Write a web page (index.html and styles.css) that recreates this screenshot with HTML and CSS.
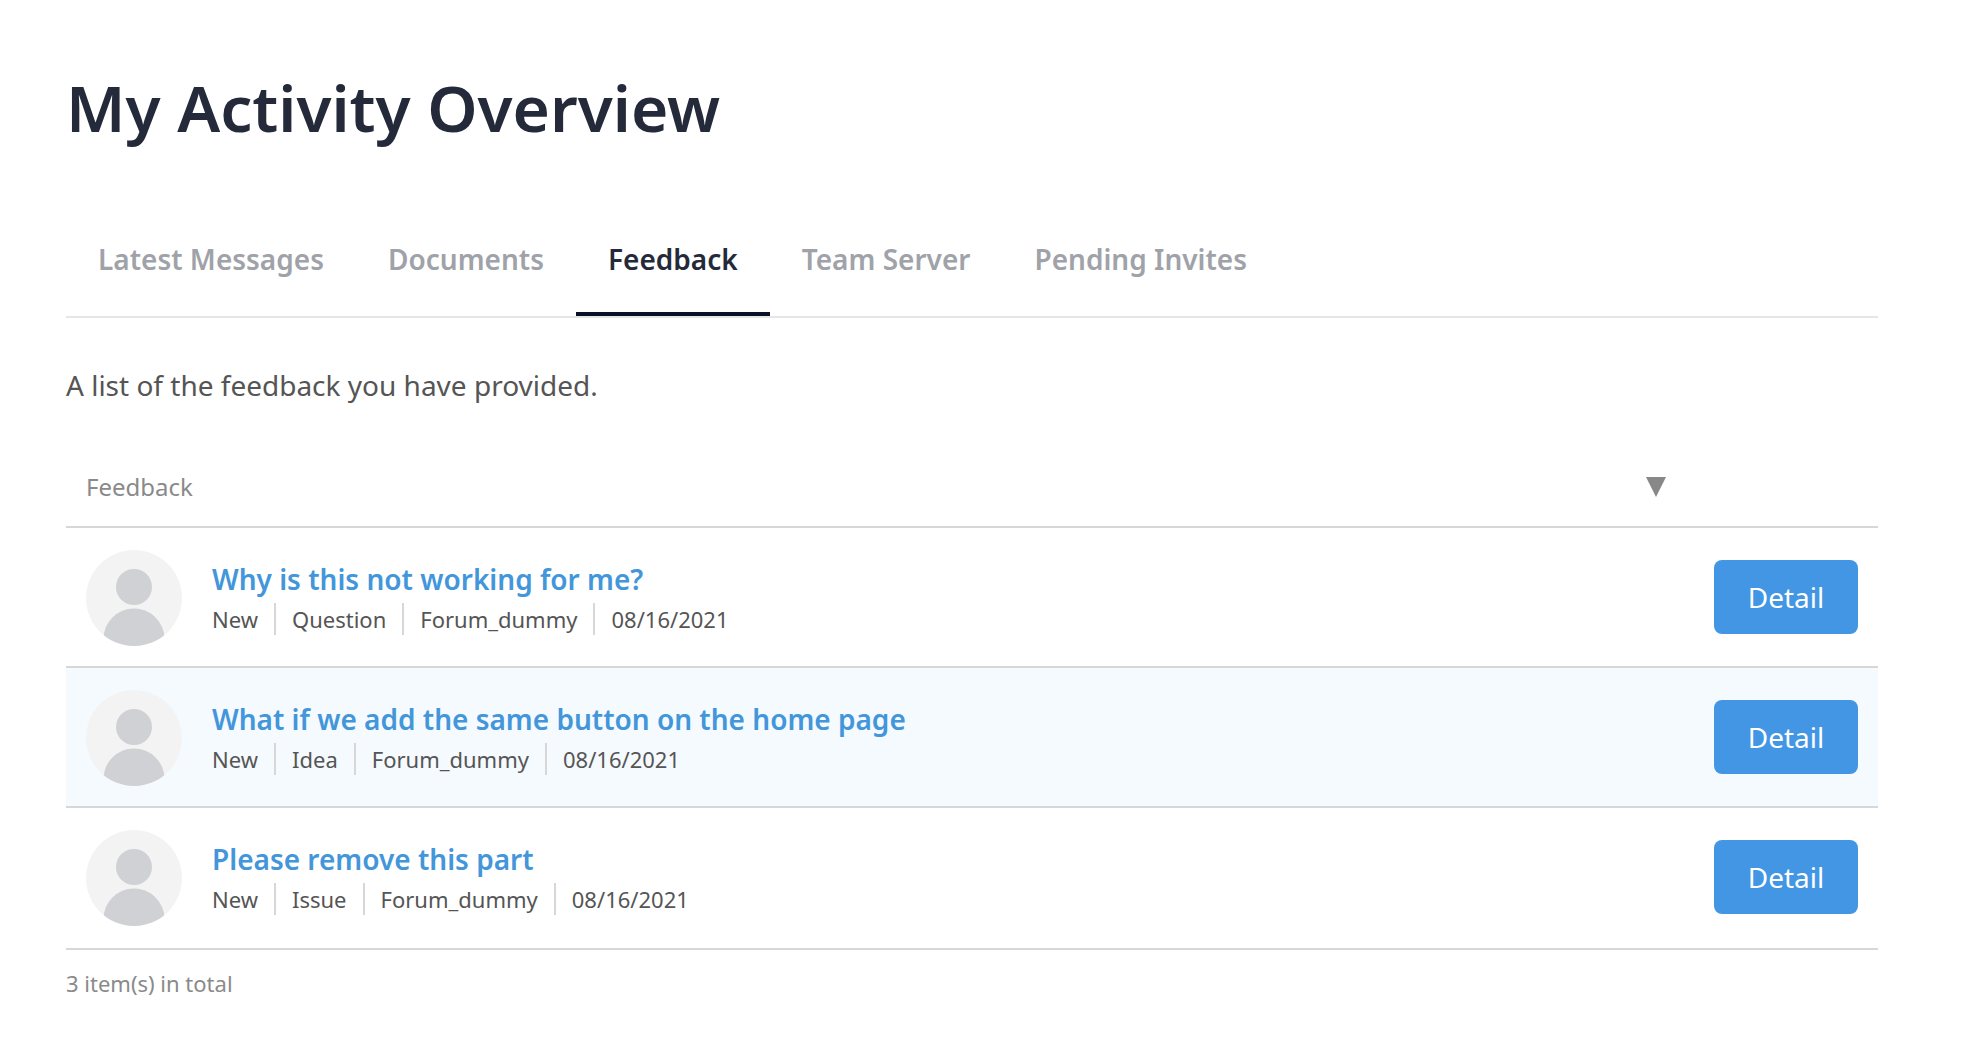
FILE: index.html
```html
<!DOCTYPE html>
<html lang="en">
<head>
<meta charset="utf-8">
<meta name="viewport" content="width=device-width, initial-scale=1">
<title>My Activity Overview</title>
<link rel="stylesheet" href="styles.css">
</head>
<body>
<svg class="sprite" aria-hidden="true">
  <symbol id="person" viewBox="0 0 96 96">
    <clipPath id="round"><circle cx="48" cy="48" r="48"/></clipPath>
    <circle cx="48" cy="48" r="48" fill="#f3f3f3"/>
    <g fill="#d0d1d5" clip-path="url(#round)">
      <circle cx="48" cy="37" r="18"/>
      <circle cx="48" cy="89" r="30.500"/>
    </g>
  </symbol>
</svg>
<main class="page">
  <h1 class="page-title">My Activity Overview</h1>
  <nav class="tabs">
    <a class="tab" href="#messages">Latest Messages</a>
    <a class="tab" href="#documents">Documents</a>
    <a class="tab tab-active" href="#feedback" aria-current="page">Feedback</a>
    <a class="tab" href="#team">Team Server</a>
    <a class="tab" href="#invites">Pending Invites</a>
  </nav>
  <p class="intro">A list of the feedback you have provided.</p>
  <table class="list">
    <thead>
      <tr>
        <th scope="col"><div class="list-head">Feedback
          <button class="sort" type="button" aria-label="Sort by feedback"><svg class="sort-icon" viewBox="0 0 20 20"><path d="M0 0H20L10 20Z" fill="#888"/></svg></button>
        </div></th>
        <td class="action"></td>
      </tr>
    </thead>
    <tbody>
      <tr>
        <td>
          <div class="entry">
            <svg class="avatar" aria-hidden="true"><use href="#person"/></svg>
            <div class="info">
              <a class="entry-title" href="#item-1">Why is this not working for me?</a>
              <ul class="meta"><li>New</li><li>Question</li><li>Forum_dummy</li><li>08/16/2021</li></ul>
            </div>
          </div>
        </td>
        <td class="action"><button class="detail" type="button">Detail</button></td>
      </tr>
      <tr>
        <td>
          <div class="entry">
            <svg class="avatar" aria-hidden="true"><use href="#person"/></svg>
            <div class="info">
              <a class="entry-title" href="#item-2">What if we add the same button on the home page</a>
              <ul class="meta"><li>New</li><li>Idea</li><li>Forum_dummy</li><li>08/16/2021</li></ul>
            </div>
          </div>
        </td>
        <td class="action"><button class="detail" type="button">Detail</button></td>
      </tr>
      <tr>
        <td>
          <div class="entry">
            <svg class="avatar" aria-hidden="true"><use href="#person"/></svg>
            <div class="info">
              <a class="entry-title" href="#item-3">Please remove this part</a>
              <ul class="meta"><li>New</li><li>Issue</li><li>Forum_dummy</li><li>08/16/2021</li></ul>
            </div>
          </div>
        </td>
        <td class="action"><button class="detail" type="button">Detail</button></td>
      </tr>
    </tbody>
  </table>
  <p class="total">3 item(s) in total</p>
</main>
</body>
</html>
```
FILE: styles.css
```css
* { box-sizing: border-box; }

body {
  margin: 0;
  background: #fff;
  color: #555;
  font: 28px/40px "Noto Sans", sans-serif;
}

.sprite { position: absolute; width: 0; height: 0; }

.page { padding: 68px 90px 24px 66px; }

.page-title {
  margin: 0 0 59px;
  color: #252a3a;
  font-size: 64px;
  font-weight: 600;
  line-height: 80px;
}

.tabs {
  display: flex;
  border-bottom: 2px solid #e6e6e6;
}

.tab {
  padding: 32px 32px 33px;
  border-bottom: 4px solid transparent;
  color: #a0a2a9;
  font-weight: 600;
  text-decoration: none;
}

.tab-active {
  border-color: #0a1125;
  color: #252a3a;
}

.intro { margin: 47px 0; }

.list {
  width: 100%;
  border-collapse: separate;
  border-spacing: 0;
}

.list th,
.list td {
  padding: 22px 0 20px 20px;
  border-bottom: 2px solid #d7d7d7;
  text-align: left;
  vertical-align: top;
}

.list thead th,
.list thead td { padding-top: 19px; padding-bottom: 23px; }

.list tbody tr:nth-child(even) { background: #f5faff; }

.list tbody tr:last-child td { padding-bottom: 22px; }

.list td.action { width: 212px; padding-right: 20px; text-align: right; }

.list tbody td.action { padding-top: 32px; }

.list-head {
  display: flex;
  align-items: center;
  justify-content: space-between;
  color: #8a8a8a;
  font-size: 24px;
  font-weight: 400;
  line-height: 32px;
}

.sort {
  display: flex;
  padding: 0;
  border: 0;
  background: none;
}

.sort-icon { width: 20px; height: 20px; }

.entry {
  display: flex;
  align-items: center;
  gap: 30px;
}

.avatar { flex: none; width: 96px; height: 96px; }

.info {
  display: flex;
  flex-direction: column;
  align-items: flex-start;
  gap: 4px;
  padding-bottom: 2px;
}

.entry-title {
  color: #4296d9;
  font-weight: 600;
  text-decoration: none;
}

.meta {
  display: flex;
  margin: 0;
  padding: 0;
  list-style: none;
  font-size: 22px;
  line-height: 32px;
}

.meta li + li {
  margin-left: 16px;
  padding-left: 16px;
  border-left: 2px solid #d7d7d7;
}

.detail {
  display: block;
  width: 144px;
  height: 74px;
  margin-left: auto;
  padding: 0;
  border: 0;
  border-radius: 8px;
  background: #4296e4;
  color: #fff;
  font: inherit;
}

.total {
  margin: 17px 0 0;
  color: #8a8a8a;
  font-size: 22px;
  line-height: 32px;
}
```
